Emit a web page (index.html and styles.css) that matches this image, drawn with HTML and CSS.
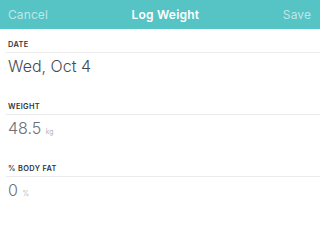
FILE: index.html
```html
<!DOCTYPE html>
<html>
<head>
<meta charset="utf-8">
<link rel="stylesheet" href="styles.css">
</head>
<body>
<header class="bar">
  <span class="bar-btn">Cancel</span>
  <span class="bar-title">Log Weight</span>
  <span class="bar-btn">Save</span>
</header>
<main>
  <section class="field">
    <div class="label">DATE</div>
    <div class="value value-dark">Wed, Oct 4</div>
  </section>
  <section class="field">
    <div class="label">WEIGHT</div>
    <div class="value">48.5 <span class="unit">kg</span></div>
  </section>
  <section class="field">
    <div class="label">% BODY FAT</div>
    <div class="value">0 <span class="unit">%</span></div>
  </section>
</main>
</body>
</html>
```

FILE: styles.css
```css
* { box-sizing: border-box; }
html, body {
  margin: 0;
  padding: 0;
  background: #ffffff;
  font-family: "Inter", "Liberation Sans", sans-serif;
}
.bar {
  height: 29px;
  background: #56c4c5;
  display: flex;
  align-items: center;
  justify-content: space-between;
  padding: 0 9px 0 8px;
}
.bar-btn {
  color: rgba(255, 255, 255, 0.62);
  font-size: 12px;
  letter-spacing: 0.1px;
}
.bar-title {
  color: #ffffff;
  font-size: 12px;
  font-weight: 600;
  letter-spacing: 0.2px;
}
.field {
  height: 62px;
  padding: 12px 0 0 6px;
}
.label {
  font-size: 7.4px;
  font-weight: 600;
  line-height: 8px;
  color: #30353d;
  letter-spacing: 0.35px;
  padding: 0 0 3px 2px;
  border-bottom: 1px solid #ececec;
}
.value {
  margin-top: 3px;
  padding-left: 2px;
  font-size: 16px;
  font-weight: 300;
  line-height: 20px;
  color: #6c7076;
}
.value-dark {
  color: #454a54;
}
.unit {
  font-size: 7px;
  color: #9a9ea3;
}
```
